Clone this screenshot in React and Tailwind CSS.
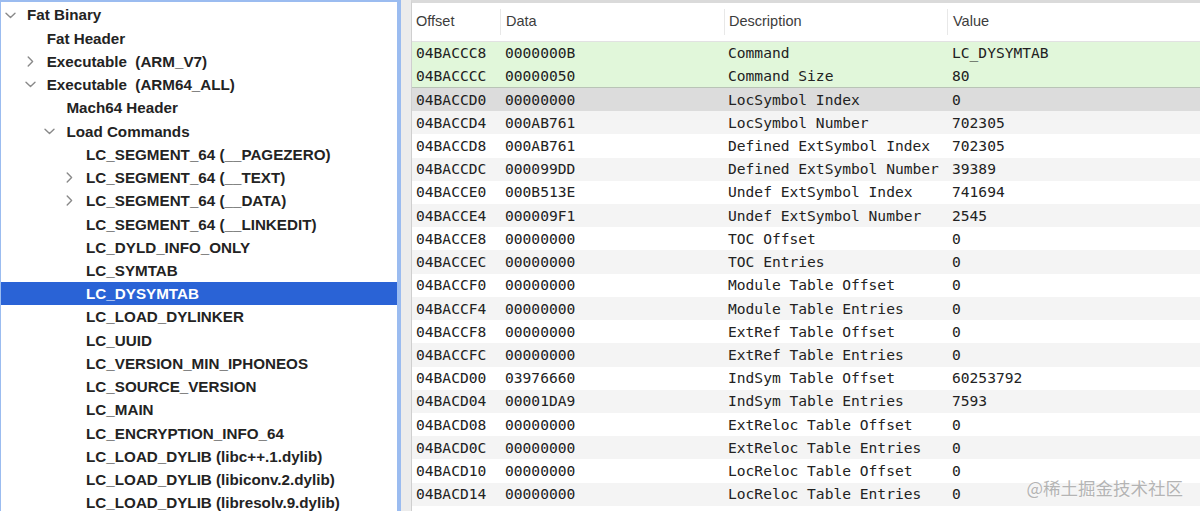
import React from "react";

const tree = [
  [0, "down", "Fat Binary"],
  [1, null, "Fat Header"],
  [1, "right", "Executable  (ARM_V7)"],
  [1, "down", "Executable  (ARM64_ALL)"],
  [2, null, "Mach64 Header"],
  [2, "down", "Load Commands"],
  [3, null, "LC_SEGMENT_64 (__PAGEZERO)"],
  [3, "right", "LC_SEGMENT_64 (__TEXT)"],
  [3, "right", "LC_SEGMENT_64 (__DATA)"],
  [3, null, "LC_SEGMENT_64 (__LINKEDIT)"],
  [3, null, "LC_DYLD_INFO_ONLY"],
  [3, null, "LC_SYMTAB"],
  [3, null, "LC_DYSYMTAB"],
  [3, null, "LC_LOAD_DYLINKER"],
  [3, null, "LC_UUID"],
  [3, null, "LC_VERSION_MIN_IPHONEOS"],
  [3, null, "LC_SOURCE_VERSION"],
  [3, null, "LC_MAIN"],
  [3, null, "LC_ENCRYPTION_INFO_64"],
  [3, null, "LC_LOAD_DYLIB (libc++.1.dylib)"],
  [3, null, "LC_LOAD_DYLIB (libiconv.2.dylib)"],
  [3, null, "LC_LOAD_DYLIB (libresolv.9.dylib)"],
];

const rows = [
  ["04BACCC8", "0000000B", "Command", "LC_DYSYMTAB"],
  ["04BACCCC", "00000050", "Command Size", "80"],
  ["04BACCD0", "00000000", "LocSymbol Index", "0"],
  ["04BACCD4", "000AB761", "LocSymbol Number", "702305"],
  ["04BACCD8", "000AB761", "Defined ExtSymbol Index", "702305"],
  ["04BACCDC", "000099DD", "Defined ExtSymbol Number", "39389"],
  ["04BACCE0", "000B513E", "Undef ExtSymbol Index", "741694"],
  ["04BACCE4", "000009F1", "Undef ExtSymbol Number", "2545"],
  ["04BACCE8", "00000000", "TOC Offset", "0"],
  ["04BACCEC", "00000000", "TOC Entries", "0"],
  ["04BACCF0", "00000000", "Module Table Offset", "0"],
  ["04BACCF4", "00000000", "Module Table Entries", "0"],
  ["04BACCF8", "00000000", "ExtRef Table Offset", "0"],
  ["04BACCFC", "00000000", "ExtRef Table Entries", "0"],
  ["04BACD00", "03976660", "IndSym Table Offset", "60253792"],
  ["04BACD04", "00001DA9", "IndSym Table Entries", "7593"],
  ["04BACD08", "00000000", "ExtReloc Table Offset", "0"],
  ["04BACD0C", "00000000", "ExtReloc Table Entries", "0"],
  ["04BACD10", "00000000", "LocReloc Table Offset", "0"],
  ["04BACD14", "00000000", "LocReloc Table Entries", "0"],
  ["", "", "", ""],
];

function Chevron({ dir }) {
  if (dir === "down")
    return (
      <svg width="11" height="7" viewBox="0 0 11 7" fill="none">
        <path d="M1 1.2 L5.5 5.6 L10 1.2" stroke="#8a8a8a" strokeWidth="1.4" strokeLinecap="round" strokeLinejoin="round" />
      </svg>
    );
  if (dir === "right")
    return (
      <svg width="7" height="11" viewBox="0 0 7 11" fill="none">
        <path d="M1.2 1 L5.6 5.5 L1.2 10" stroke="#8a8a8a" strokeWidth="1.4" strokeLinecap="round" strokeLinejoin="round" />
      </svg>
    );
  return null;
}

const indent = ["pl-0", "pl-[19.7px]", "pl-[39.4px]", "pl-[59.1px]"];

function rowBg(i) {
  if (i === 0) return "bg-[#e1f7da]";
  if (i === 1) return "bg-[#e1f7da] shadow-[inset_0_-1px_0_#b9c4b6]";
  if (i === 2) return "bg-[#dcdcdc]";
  return i % 2 === 1 ? "bg-[#f4f4f4]" : "bg-white";
}

export default function App() {
  return (
    <div className="relative flex w-[1200px] h-[511px] overflow-hidden bg-[#ececec]">
      {/* Left tree panel */}
      <div className="w-[401px] shrink-0 h-full bg-white border-t-[2px] border-r-[4px] border-l-[1px] border-[#9bbcf0] pt-[1.4px] font-['Liberation_Sans',Arial,sans-serif] font-bold text-[15.2px] text-[#232323]">
        {tree.map(([lvl, chev, label], i) => {
          const sel = i === 12;
          return (
            <div
              key={i}
              className={`flex items-center h-[23.24px] ${indent[lvl]} ${sel ? "bg-[#2a63d6] text-white" : ""}`}
            >
              <div className="w-[19px] shrink-0 flex items-center justify-center">
                <Chevron dir={chev} />
              </div>
              <span className="ml-[7px] whitespace-pre leading-none">{label}</span>
            </div>
          );
        })}
      </div>

      {/* Right table */}
      <div className="ml-[10px] flex-1 h-full flex flex-col bg-white border-l border-[#cfcfcf] border-t-[3px] border-t-[#dadada]">
        <div className="flex h-[38.5px] shrink-0 items-center bg-white border-b border-[#e2e2e2] font-['Liberation_Sans',Arial,sans-serif] text-[14.5px] text-[#3c3c3c]">
          <div className="w-[88px] pl-[4px] shrink-0">Offset</div>
          <div className="w-[224px] shrink-0 h-[26px] flex items-center pl-[5px] border-l border-[#e8e8e8]">Data</div>
          <div className="w-[223px] shrink-0 h-[26px] flex items-center pl-[4px] border-l border-[#e8e8e8]">Description</div>
          <div className="flex-1 h-[26px] flex items-center pl-[5px] border-l border-[#e8e8e8]">Value</div>
        </div>
        <div className="flex-1 font-['DejaVu_Sans_Mono',Menlo,monospace] text-[14.6px] text-[#222]">
          {rows.map((r, i) => (
            <div key={i} className={`flex items-center h-[23.22px] ${rowBg(i)}`}>
              <div className="w-[88px] pl-[4px] shrink-0 whitespace-pre">{r[0]}</div>
              <div className="w-[224px] pl-[5px] shrink-0 whitespace-pre">{r[1]}</div>
              <div className="w-[223px] pl-[4px] shrink-0 whitespace-pre">{r[2]}</div>
              <div className="flex-1 pl-[5px] whitespace-pre">{r[3]}</div>
            </div>
          ))}
        </div>
      </div>

      {/* Watermark */}
      <div className="absolute right-[17px] bottom-[15px] font-['Noto_Sans_CJK_SC','Noto_Sans',sans-serif] text-[17.5px] leading-none text-[#b4b4b4] [text-shadow:0_0_2px_#ffffff]">
        @稀土掘金技术社区
      </div>
    </div>
  );
}
